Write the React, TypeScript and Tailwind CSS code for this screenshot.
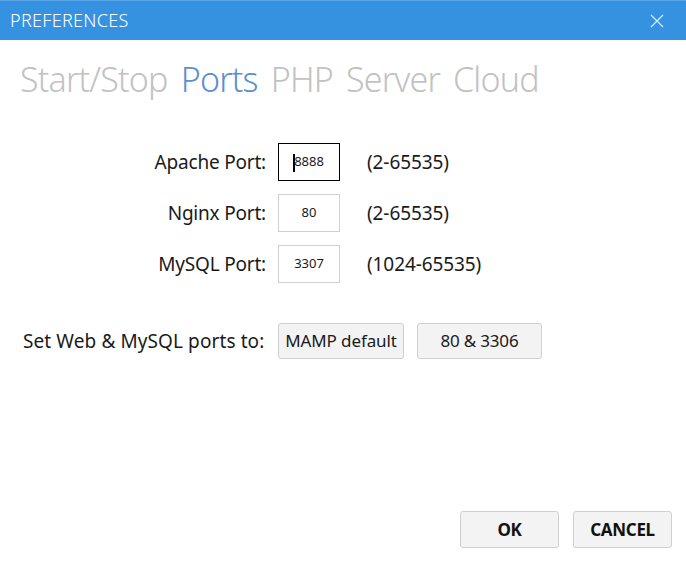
import React from "react";

const font = { fontFamily: '"Noto Sans", "Open Sans", sans-serif' };

function PortRow({ label, value, range, focused }: { label: string; value: string; range: string; focused?: boolean }) {
  return (
    <div className="flex items-center h-[38px]">
      <div className="w-[266px] text-right text-[19px] text-[#1a1a1a] tracking-[-0.2px]">{label}</div>
      <div
        className={
          "ml-[12px] w-[62px] h-[38px] flex items-center justify-center text-[13px] text-[#1a1a1a] bg-white relative " +
          (focused ? "border border-black" : "border border-[#d0d0d0]")
        }
      >
        {focused && <span className="absolute left-[14px] top-[10px] w-[1.5px] h-[18px] bg-black" />}
        {value}
      </div>
      <div className="ml-[27px] text-[19px] text-[#1a1a1a] tracking-[-0.1px]">{range}</div>
    </div>
  );
}

export default function App() {
  return (
    <div className="w-[686px] h-[562px] bg-white flex flex-col overflow-hidden" style={font}>
      <div className="h-[1px] bg-[#5aa6e8]" />
      <div className="h-[39px] bg-[#3592e0] flex items-center justify-between pl-[10px] pr-[22px]">
        <span className="text-white text-[18px] tracking-[0.3px] font-light">PREFERENCES</span>
        <svg width="14" height="14" viewBox="0 0 14 14" className="mt-[1px]">
          <path d="M1 1 L13 13 M13 1 L1 13" stroke="#d9ecfb" strokeWidth="1.2" />
        </svg>
      </div>
      <div className="flex items-baseline gap-[13px] pl-[20px] mt-[16px] text-[34px] leading-[46px] tracking-[-0.8px] font-light">
        <span className="text-[#c2c2c2]">Start/Stop</span>
        <span className="text-[#5b8fd1]">Ports</span>
        <span className="text-[#c2c2c2]">PHP</span>
        <span className="text-[#c2c2c2]">Server</span>
        <span className="text-[#c2c2c2]">Cloud</span>
      </div>
      <div className="flex flex-col gap-[13px] mt-[41px]">
        <PortRow label="Apache Port:" value="8888" range="(2-65535)" focused />
        <PortRow label="Nginx Port:" value="80" range="(2-65535)" />
        <PortRow label="MySQL Port:" value="3307" range="(1024-65535)" />
      </div>
      <div className="flex items-center mt-[40px] pl-[23px] h-[36px]">
        <span className="text-[19px] text-[#1a1a1a] tracking-[0.1px] w-[255px]">Set Web &amp; MySQL ports to:</span>
        <div className="w-[126px] h-[36px] rounded-[3px] border border-[#cfcfcf] bg-[#f3f3f3] flex items-center justify-center text-[17px] text-[#1a1a1a] tracking-[-0.1px]">
          MAMP default
        </div>
        <div className="ml-[13px] w-[125px] h-[36px] rounded-[3px] border border-[#cfcfcf] bg-[#f3f3f3] flex items-center justify-center text-[17px] text-[#1a1a1a] tracking-[-0.2px]">
          80 &amp; 3306
        </div>
      </div>
      <div className="mt-auto flex justify-end gap-[14px] pr-[14px] pb-[14px]">
        <div className="w-[99px] h-[37px] rounded-[3px] border border-[#cfcfcf] bg-[#f3f3f3] flex items-center justify-center text-[17px] font-bold text-[#111] tracking-[-0.3px]">
          OK
        </div>
        <div className="w-[99px] h-[37px] rounded-[3px] border border-[#cfcfcf] bg-[#f3f3f3] flex items-center justify-center text-[17px] font-bold text-[#111] tracking-[-0.3px]">
          CANCEL
        </div>
      </div>
    </div>
  );
}
